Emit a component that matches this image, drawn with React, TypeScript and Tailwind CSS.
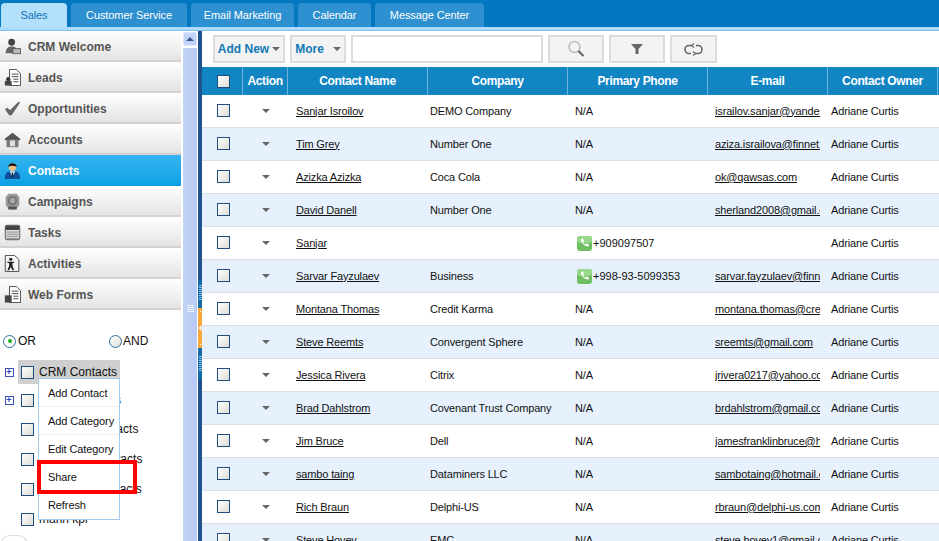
import React from "react";

const FONT = "[font-family:'Liberation_Sans',Arial,sans-serif]";

const tabs = [
  { label: "Customer Service", w: "w-[116px]" },
  { label: "Email Marketing", w: "w-[103px]" },
  { label: "Calendar", w: "w-[73px]" },
  { label: "Message Center", w: "w-[109px]" },
];

function Ico({ children }: { children: React.ReactNode }) {
  return (
    <svg width="17" height="17" viewBox="0 0 20 20" className="shrink-0">
      {children}
    </svg>
  );
}

const icons: Record<string, React.ReactNode> = {
  welcome: (
    <Ico>
      <circle cx="9" cy="5" r="4" fill="#444" />
      <path d="M2 18c0-6 3-8 7-8s7 2 7 8z" fill="#666" />
      <rect x="10.500" y="12.500" width="9" height="6" fill="#bbb" stroke="#555" />
    </Ico>
  ),
  leads: (
    <Ico>
      <path d="M6.500 0.500h8l5 5v14h-13z" fill="#fff" stroke="#333" />
      <path d="M9 6h8M9 9h8M11 12h6M11 15h6" stroke="#333" />
      <circle cx="5" cy="12" r="2.500" fill="#333" />
      <rect x="1" y="14" width="8" height="5.500" fill="#444" />
    </Ico>
  ),
  opps: (
    <Ico>
      <path d="M1 11l3-2 3 3L17 2l2 1-10 15H6z" fill="#666" />
    </Ico>
  ),
  accounts: (
    <Ico>
      <path d="M1 9l9-7 9 7v2H1z" fill="#555" />
      <rect x="3" y="10" width="14" height="9" fill="#777" />
      <rect x="7" y="11" width="6" height="7" fill="#ddd" />
    </Ico>
  ),
  contacts: (
    <Ico>
      <path d="M1 20c0-7 3-9 9-9s9 2 9 9z" fill="#0f4f9a" />
      <path d="M7 11h6l-3 7z" fill="#fff" />
      <path d="M9.300 12h1.400l.5 5-1.200 1.500L8.800 17z" fill="#123" />
      <circle cx="10" cy="6" r="4.500" fill="#f3c08c" />
      <path d="M5 6c0-6 10-6 10 0-3-2-7-2-10 0z" fill="#111" />
    </Ico>
  ),
  campaigns: (
    <Ico>
      <path d="M5 1h10l3 4v9l-3 4H5l-3-4V5z" fill="#999" />
      <circle cx="10" cy="9" r="5.500" fill="#777" />
      <circle cx="10" cy="9" r="3" fill="#aaa" />
      <rect x="5" y="16" width="10" height="3.500" fill="#555" />
    </Ico>
  ),
  tasks: (
    <Ico>
      <rect x="1.500" y="1.500" width="17" height="17" rx="2" fill="#ddd" stroke="#444" />
      <rect x="2" y="2" width="16" height="5" fill="#444" />
      <path d="M3 9.500h14M3 12h14M3 14.500h14M3 17h14" stroke="#888" />
    </Ico>
  ),
  activities: (
    <Ico>
      <path d="M1.500 0.500h11l5 5v14h-16z" fill="#f4f4f4" stroke="#333" />
      <circle cx="8" cy="5" r="1.800" fill="#222" />
      <path d="M4 8h8v1.500H10V13l2 5h-2l-2-4-2 4H4l2-5V9.500H4z" fill="#222" />
    </Ico>
  ),
  forms: (
    <Ico>
      <path d="M6.500 0.500h8l5 5v14h-13z" fill="#fff" stroke="#333" />
      <path d="M9 6h8M9 9h8M11 12h6M11 15h6" stroke="#333" />
      <rect x="1" y="11" width="8" height="8.500" fill="#444" />
    </Ico>
  ),
};

const nav = [
  { label: "CRM Welcome", icon: "welcome" },
  { label: "Leads", icon: "leads" },
  { label: "Opportunities", icon: "opps" },
  { label: "Accounts", icon: "accounts" },
  { label: "Contacts", icon: "contacts", active: true },
  { label: "Campaigns", icon: "campaigns" },
  { label: "Tasks", icon: "tasks" },
  { label: "Activities", icon: "activities" },
  { label: "Web Forms", icon: "forms" },
];

const rows = [
  ["Sanjar Isroilov", "DEMO Company", "N/A", "israilov.sanjar@yandex.ru"],
  ["Tim Grey", "Number One", "N/A", "aziza.israilova@finnet.com"],
  ["Azizka Azizka", "Coca Cola", "N/A", "ok@qawsas.com"],
  ["David Danell", "Number One", "N/A", "sherland2008@gmail.com"],
  ["Sanjar", "", "+909097507", ""],
  ["Sarvar Fayzulaev", "Business", "+998-93-5099353", "sarvar.fayzulaev@finnet.com"],
  ["Montana Thomas", "Credit Karma", "N/A", "montana.thomas@creditkarma.com"],
  ["Steve Reemts", "Convergent Sphere", "N/A", "sreemts@gmail.com"],
  ["Jessica Rivera", "Citrix", "N/A", "jrivera0217@yahoo.com"],
  ["Brad Dahlstrom", "Covenant Trust Company", "N/A", "brdahlstrom@gmail.com"],
  ["Jim Bruce", "Dell", "N/A", "jamesfranklinbruce@hotmail.com"],
  ["sambo taing", "Dataminers LLC", "N/A", "sambotaing@hotmail.com"],
  ["Rich Braun", "Delphi-US", "N/A", "rbraun@delphi-us.com"],
  ["Steve Hovey", "EMC", "N/A", "steve.hovey1@gmail.com"],
];

const COLS = "grid grid-cols-[40px_45px_140px_140px_140px_120px_110px_2px]";

function Check({ className = "" }: { className?: string }) {
  return (
    <span
      className={`block h-[13px] w-[13px] shrink-0 border border-[#1f4e7e] bg-gradient-to-br from-white to-[#dcdcd6] ${className}`}
    />
  );
}

function Plus() {
  return (
    <span className="flex h-[9px] w-[9px] items-center justify-center border border-[#3a4fc0] bg-white text-[9px] leading-none font-bold text-[#2a3fc0]">
      +
    </span>
  );
}

function Caret({ className = "" }: { className?: string }) {
  return (
    <span
      className={`inline-block h-0 w-0 border-x-[4px] border-t-[4px] border-x-transparent border-t-[#666] ${className}`}
    />
  );
}

function Phone() {
  return (
    <svg width="15" height="15" viewBox="0 0 15 15" className="shrink-0">
      <rect width="15" height="15" rx="3" fill="#6fbf62" />
      <rect width="15" height="7" rx="3" fill="#97d78c" />
      <path
        d="M4 3l2-.5 1 2.500-1 1c.5 1.200 1.300 2 2.500 2.500l1-1 2.500 1-.5 2C9 11 3.500 7 4 3z"
        fill="#fff"
      />
    </svg>
  );
}

function ToolBtn({ className, children }: { className: string; children: React.ReactNode }) {
  return (
    <div
      className={`flex h-[28px] items-center justify-center border-2 border-[#dcdcdc] bg-[#f3f3f3] ${className}`}
    >
      {children}
    </div>
  );
}

function TreeRow({
  label,
  plus,
  selected,
  className = "",
}: {
  label: string;
  plus?: boolean;
  selected?: boolean;
  className?: string;
}) {
  return (
    <div className={`flex h-[30px] items-center ${className}`}>
      <span className="flex w-[18px] justify-center">{plus && <Plus />}</span>
      <div className={`flex h-[24px] items-center pl-[3px] pr-[3px] ${selected ? "bg-[#cfcfcf]" : ""}`}>
        <Check />
        <span className="ml-[5px] text-[12px] whitespace-nowrap text-[#111]">{label}</span>
      </div>
    </div>
  );
}

function Ticks() {
  return <div className="mx-auto h-full w-[3px] bg-[repeating-linear-gradient(#8fc0e4_0_1px,transparent_1px_2px)]" />;
}

export default function App() {
  return (
    <div className={`${FONT} flex h-[541px] w-[939px] flex-col overflow-hidden bg-white`}>
      {/* Tab strip */}
      <div className="flex h-[31px] shrink-0 flex-col bg-[#0377bf]">
        <div className="flex h-[27px] items-end gap-[4px] pl-[1px] tracking-[-0.1px]">
          <div className="flex h-[24px] w-[66px] items-center justify-center rounded-t-[4px] bg-[#b3e0fb] text-[11px] text-[#1175b8]">
            Sales
          </div>
          {tabs.map((t) => (
            <div
              key={t.label}
              className={`flex h-[24px] items-center justify-center rounded-t-[4px] bg-[#2d90d0] text-[11px] text-white ${t.w}`}
            >
              {t.label}
            </div>
          ))}
        </div>
        <div className="h-[3px] bg-[#aedbfb]" />
        <div className="h-px bg-[#7fbdea]" />
      </div>

      <div className="flex min-h-0 flex-1">
        {/* Sidebar */}
        <aside className="relative w-[181px] shrink-0">
          {nav.map((n) => (
            <div
              key={n.label}
              className={
                n.active
                  ? "flex h-[31px] items-center gap-[7px] bg-gradient-to-b from-[#33b4f0] to-[#08a1e4] pl-[4px] text-[12px] font-bold text-white"
                  : "flex h-[31px] items-center gap-[7px] border-b-2 border-[#d6d0d0] bg-gradient-to-b from-white to-[#e4e4e4] pt-[2px] pl-[4px] text-[12px] font-bold text-[#555]"
              }
            >
              {icons[n.icon]}
              <span>{n.label}</span>
            </div>
          ))}

          <div className="mt-[23px] flex h-[16px] items-center pl-[3px] text-[12px] text-[#111]">
            <span className="flex h-[13px] w-[13px] items-center justify-center rounded-full border border-[#2f6d9f] bg-white">
              <span className="h-[4px] w-[4px] rounded-full bg-[#1fb11f]" />
            </span>
            <span className="ml-[2px]">OR</span>
            <span className="ml-[73px] h-[13px] w-[13px] rounded-full border border-[#2f6d9f] bg-gradient-to-br from-white to-[#dcdcd6]" />
            <span className="ml-[1px]">AND</span>
          </div>

          <div className="mt-[8px] flex flex-col">
            <TreeRow label="CRM Contacts" plus selected />
            <TreeRow label="Sales Accounts" plus className="-mt-[2px]" />
            <TreeRow label="Business Contacts" className="-mt-[1px]" />
            <TreeRow label="Marketing Contacts" />
            <TreeRow label="Customer Contacts" />
            <TreeRow label="mann kpi" />
          </div>

          {/* Context menu */}
          <div className="absolute top-[347px] left-[38px] w-[82px] border border-[#a3cdf0] bg-white text-[11px] tracking-[-0.1px] text-[#111]">
            {["Add Contact", "Add Category", "Edit Category", "Share", "Refresh"].map((m, i) => (
              <div
                key={m}
                className={`flex h-[28px] items-center border-b pt-[1px] pl-[9px] whitespace-nowrap ${
                  i < 4 ? "border-[#eeeeee]" : "border-transparent"
                }`}
              >
                {m}
              </div>
            ))}
          </div>
          {/* Red highlight */}
          <div className="absolute top-[429px] left-[37px] h-[34px] w-[100px] border-[4px] border-[#fe0000]" />
          <div className="absolute top-[504px] left-0 h-[10px] w-[28px] rounded-t-[10px] border border-[#ddd] bg-white" />
        </aside>

        {/* Scrollbar */}
        <div className="flex w-[17px] shrink-0 flex-col pt-px pr-[1px] pl-[2px]">
          <div className="flex h-[14px] items-center justify-center rounded-[2px] border border-[#dbe6fb] bg-[#c3d4f8]">
            <span className="h-0 w-0 border-x-[4px] border-b-[4px] border-x-transparent border-b-[#3b5a8f]" />
          </div>
          <div className="mt-[2px] flex flex-1 items-start justify-center bg-gradient-to-r from-[#c3d3f8] to-[#b7caf5] pt-[257px]">
            <span className="block h-[8px] w-[7px] bg-[repeating-linear-gradient(#eef3ff_0_1px,transparent_1px_2px)]" />
          </div>
        </div>

        {/* Splitter */}
        <div className="flex w-[4px] shrink-0 flex-col items-stretch bg-[#20528d]">
          <div className="mt-[249px] h-[28px] bg-[#126aa9] pt-[5px] pb-[8px]">
            <Ticks />
          </div>
          <div className="flex h-[40px] flex-col items-center justify-between bg-[#fea83e] py-[3px]">
            <span className="h-px w-px bg-white" />
            <svg width="4" height="6" viewBox="0 0 4 6">
              <path d="M3.500 0L0.500 3l3 3z" fill="#fff" />
            </svg>
            <span className="h-px w-px bg-white" />
          </div>
          <div className="h-[31px] bg-[#126aa9] pt-[8px] pb-[7px]">
            <Ticks />
          </div>
        </div>

        {/* Main */}
        <main className="flex min-w-0 flex-1 flex-col">
          <div className="flex h-[36px] shrink-0 items-start gap-[5px] pt-[4px] pl-[11px]">
            <ToolBtn className="w-[72px] gap-[3px]">
              <span className="text-[12px] font-bold whitespace-nowrap text-[#1278b6]">Add New</span>
              <Caret className="border-x-[3px] border-t-[3px]" />
            </ToolBtn>
            <ToolBtn className="w-[56px] gap-[9px]">
              <span className="text-[12px] font-bold text-[#1278b6]">More</span>
              <Caret className="border-x-[3px] border-t-[3px]" />
            </ToolBtn>
            <div className="h-[28px] w-[192px] border-2 border-[#dcdcdc] bg-white" />
            <ToolBtn className="w-[56px]">
              <svg width="18" height="18" viewBox="0 0 18 18" fill="none">
                <circle cx="7.500" cy="7" r="5.500" stroke="#aaa" strokeWidth="1.200" />
                <path d="M11.500 11l5 5" stroke="#666" strokeWidth="2.200" />
              </svg>
            </ToolBtn>
            <ToolBtn className="w-[56px]">
              <svg width="14" height="12" viewBox="0 0 14 12">
                <path d="M1 1h12L8.500 6v5h-3V6z" fill="#666" />
              </svg>
            </ToolBtn>
            <ToolBtn className="w-[47px]">
              <svg width="19" height="13" viewBox="0 0 19 13" fill="none" stroke="#666" strokeWidth="1.600">
                <path d="M8 2.500H5a4 4 0 0 0 0 8h2" />
                <path d="M11 10.500h3a4 4 0 0 0 0-8h-2" />
                <path d="M10 0.500l-2.500 2 2.500 2M9 8.500l2.500 2-2.500 2" strokeWidth="1.200" />
              </svg>
            </ToolBtn>
          </div>

          {/* Table header */}
          <div className={`${COLS} h-[28px] shrink-0 bg-[#1285c3] text-[12px] font-bold tracking-[-0.35px] text-white`}>
            <div className="flex items-center justify-center pl-[2px]">
              <Check />
            </div>
            {["Action", "Contact Name", "Company", "Primary Phone", "E-mail", "Contact Owner"].map((h) => (
              <div key={h} className="flex items-center justify-center border-l border-[#6db5de]">
                {h}
              </div>
            ))}
            <div className="border-l border-[#6db5de]" />
          </div>

          {/* Rows */}
          {rows.map((r, i) => (
            <div
              key={r[0]}
              className={`${COLS} h-[33px] shrink-0 border-b border-[#dce0e6] text-[11px] tracking-[-0.15px] text-[#111] ${
                i % 2 ? "bg-[#e6f1fd]" : "bg-white"
              }`}
            >
              <div className="flex items-center justify-center pl-[2px]">
                <Check className="mb-[2px]" />
              </div>
              <div className="flex items-center justify-center pl-[2px]">
                <Caret />
              </div>
              <div className="flex items-center pl-[9px]">
                <span className="underline">{r[0]}</span>
              </div>
              <div className="flex items-center pl-[3px]">{r[1]}</div>
              {r[2] === "N/A" ? (
                <div className="flex items-center pl-[8px]">{r[2]}</div>
              ) : (
                <div className="flex items-center gap-[1px] pl-[10px] tracking-normal">
                  <Phone />
                  {r[2]}
                </div>
              )}
              <div className="flex items-center pl-[8px]">
                <span className="block max-w-[105px] overflow-hidden whitespace-nowrap underline">{r[3]}</span>
              </div>
              <div className="flex items-center pl-[4px] whitespace-nowrap">Adriane Curtis</div>
              <div />
            </div>
          ))}
        </main>
      </div>
    </div>
  );
}
